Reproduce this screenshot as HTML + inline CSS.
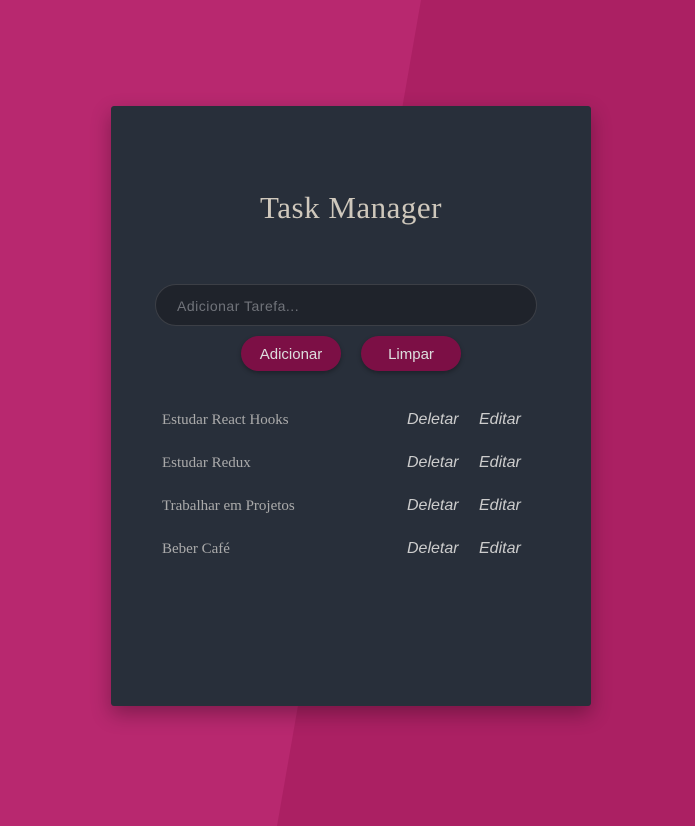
<!DOCTYPE html>
<html><head><meta charset="utf-8"><style>
body{margin:0;width:695px;height:826px;overflow:hidden;position:relative;font-family:"Liberation Sans",sans-serif}
.bg{position:absolute;inset:0;background:#ab2063}
.bg2{position:absolute;inset:0;background:#b8286f;clip-path:polygon(0 0,421px 0,277px 826px,0 826px)}
.card{position:absolute;left:111px;top:106px;width:480px;height:600px;background:#282f3a;border-radius:3px;box-shadow:0 8px 20px rgba(0,0,0,.3)}
h1{position:absolute;top:84px;left:0;width:480px;text-align:center;margin:0;font:300 31px "Liberation Serif",serif;color:#cfc8bc;letter-spacing:.5px}
.inp{position:absolute;left:44px;top:178px;width:380px;height:40px;border:1px solid #3c3f46;border-radius:21px;background:#1f232b;color:#70737a;font-size:14px;line-height:42px}
.inp span{margin-left:21px;letter-spacing:.5px}
.btn{position:absolute;top:230px;width:100px;height:35px;border-radius:18px;background:#7c0f45;color:#ddd;font-size:15px;text-align:center;line-height:37px;box-shadow:0 2px 5px rgba(0,0,0,.3)}
.row{position:absolute;left:51px;font:15px "Liberation Serif",serif;color:#aaa}
.d,.e{position:absolute;font-style:italic;font-size:16px;color:#ccc}
</style></head><body>
<div class="bg"></div><div class="bg2"></div>
<div class="card">
<h1>Task Manager</h1>
<div class="inp"><span>Adicionar Tarefa...</span></div>
<div class="btn" style="left:130px">Adicionar</div>
<div class="btn" style="left:250px">Limpar</div>
<div class="row" style="top:306px">Estudar React Hooks</div><div class="d" style="left:296px;top:305px">Deletar</div><div class="e" style="left:368px;top:305px">Editar</div>
<div class="row" style="top:349px">Estudar Redux</div><div class="d" style="left:296px;top:348px">Deletar</div><div class="e" style="left:368px;top:348px">Editar</div>
<div class="row" style="top:392px">Trabalhar em Projetos</div><div class="d" style="left:296px;top:391px">Deletar</div><div class="e" style="left:368px;top:391px">Editar</div>
<div class="row" style="top:435px">Beber Café</div><div class="d" style="left:296px;top:434px">Deletar</div><div class="e" style="left:368px;top:434px">Editar</div>
</div>
</body></html>
